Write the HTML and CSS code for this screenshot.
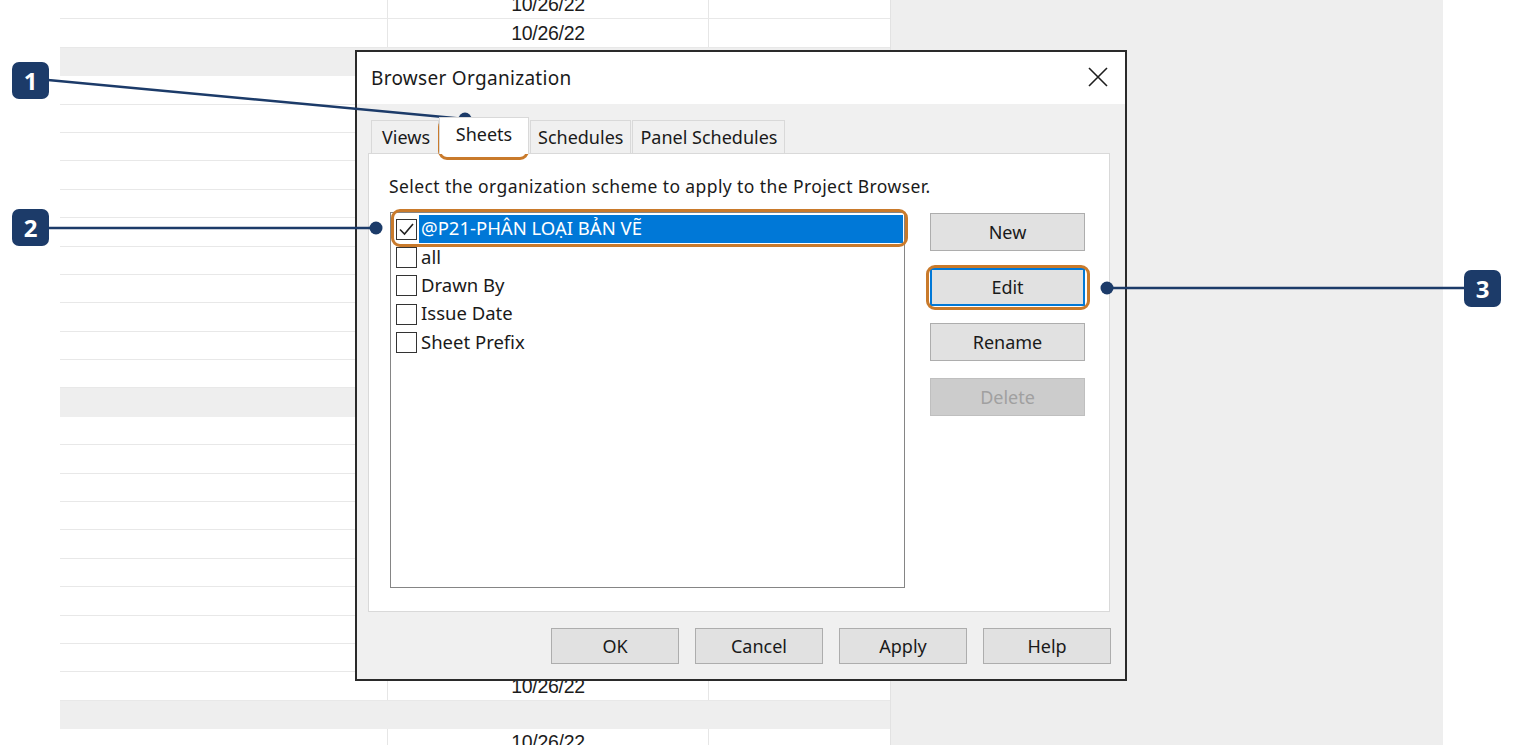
FILE: index.html
```html
<!DOCTYPE html>
<html lang="en">
<head>
<meta charset="utf-8">
<title>Browser Organization</title>
<link rel="stylesheet" href="styles.css">
</head>
<body>
<div class="page">
  <div class="sheet">
    <div class="gutter"></div>
    <div class="table">
      <div class="row"><div class="cell"></div><div class="cell date">10/26/22</div><div class="cell"></div></div>
      <div class="row"><div class="cell"></div><div class="cell date">10/26/22</div><div class="cell"></div></div>
      <div class="row band"></div>
      <div class="row"><div class="cell"></div><div class="cell date">10/26/22</div><div class="cell"></div></div>
      <div class="row"><div class="cell"></div><div class="cell date">10/26/22</div><div class="cell"></div></div>
      <div class="row"><div class="cell"></div><div class="cell date">10/26/22</div><div class="cell"></div></div>
      <div class="row"><div class="cell"></div><div class="cell date">10/26/22</div><div class="cell"></div></div>
      <div class="row"><div class="cell"></div><div class="cell date">10/26/22</div><div class="cell"></div></div>
      <div class="row"><div class="cell"></div><div class="cell date">10/26/22</div><div class="cell"></div></div>
      <div class="row"><div class="cell"></div><div class="cell date">10/26/22</div><div class="cell"></div></div>
      <div class="row"><div class="cell"></div><div class="cell date">10/26/22</div><div class="cell"></div></div>
      <div class="row"><div class="cell"></div><div class="cell date">10/26/22</div><div class="cell"></div></div>
      <div class="row"><div class="cell"></div><div class="cell date">10/26/22</div><div class="cell"></div></div>
      <div class="row"><div class="cell"></div><div class="cell date">10/26/22</div><div class="cell"></div></div>
      <div class="row band"></div>
      <div class="row"><div class="cell"></div><div class="cell date">10/26/22</div><div class="cell"></div></div>
      <div class="row"><div class="cell"></div><div class="cell date">10/26/22</div><div class="cell"></div></div>
      <div class="row"><div class="cell"></div><div class="cell date">10/26/22</div><div class="cell"></div></div>
      <div class="row"><div class="cell"></div><div class="cell date">10/26/22</div><div class="cell"></div></div>
      <div class="row"><div class="cell"></div><div class="cell date">10/26/22</div><div class="cell"></div></div>
      <div class="row"><div class="cell"></div><div class="cell date">10/26/22</div><div class="cell"></div></div>
      <div class="row"><div class="cell"></div><div class="cell date">10/26/22</div><div class="cell"></div></div>
      <div class="row"><div class="cell"></div><div class="cell date">10/26/22</div><div class="cell"></div></div>
      <div class="row"><div class="cell"></div><div class="cell date">10/26/22</div><div class="cell"></div></div>
      <div class="row"><div class="cell"></div><div class="cell date">10/26/22</div><div class="cell"></div></div>
      <div class="row band"></div>
      <div class="row"><div class="cell"></div><div class="cell date">10/26/22</div><div class="cell"></div></div>
    </div>
    <div class="side"></div>
  </div>

  <div class="dialog">
    <div class="titlebar">
      <span class="title">Browser Organization</span>
      <svg class="close" width="20" height="20" viewBox="0 0 20 20"><path d="M1 1 L19 19 M19 1 L1 19" stroke="#1e1e1e" stroke-width="1.6" fill="none"/></svg>
    </div>
    <div class="body">
      <div class="tabs">
        <div class="tab">Views</div>
        <div class="tab active">Sheets</div>
        <div class="tab">Schedules</div>
        <div class="tab">Panel Schedules</div>
      </div>
      <div class="panel">
        <p class="hint">Select the organization scheme to apply to the Project Browser.</p>
        <div class="content">
          <div class="listbox">
            <div class="item">
              <span class="check"><svg width="19" height="19" viewBox="0 0 19 19"><path d="M3 9.5 L7.5 14 L16 4" stroke="#222" stroke-width="1.6" fill="none"/></svg></span>
              <span class="label selected">@P21-PHÂN LOẠI BẢN VẼ</span>
            </div>
            <div class="item"><span class="check"></span><span class="label">all</span></div>
            <div class="item"><span class="check"></span><span class="label">Drawn By</span></div>
            <div class="item"><span class="check"></span><span class="label">Issue Date</span></div>
            <div class="item"><span class="check"></span><span class="label">Sheet Prefix</span></div>
          </div>
          <div class="actions">
            <button class="btn">New</button>
            <button class="btn focused">Edit</button>
            <button class="btn">Rename</button>
            <button class="btn disabled">Delete</button>
          </div>
        </div>
      </div>
      <div class="footer">
        <button class="btn wide">OK</button>
        <button class="btn wide">Cancel</button>
        <button class="btn wide">Apply</button>
        <button class="btn wide">Help</button>
      </div>
    </div>
  </div>

  <div class="overlay">
    <svg class="callouts" width="1520" height="745" viewBox="0 0 1520 745">
      <g stroke="#1c3b69" stroke-width="2.6" fill="none">
        <line x1="48" y1="80" x2="465" y2="119"/>
        <line x1="48" y1="228" x2="376" y2="228"/>
        <line x1="1107" y1="288" x2="1465" y2="288"/>
      </g>
      <g fill="#1c3b69">
        <circle cx="465" cy="119" r="6.5"/>
        <circle cx="376" cy="228" r="6.5"/>
        <circle cx="1107" cy="288" r="6.5"/>
      </g>
    </svg>
    <div class="ring ring-tab"></div>
    <div class="ring ring-row"></div>
    <div class="ring ring-edit"></div>
    <div class="badge badge-1">1</div>
    <div class="badge badge-2">2</div>
    <div class="badge badge-3">3</div>
  </div>
</div>
</body>
</html>
```

FILE: styles.css
```css
* { box-sizing: border-box; }

html, body {
  margin: 0;
  padding: 0;
  background: #ffffff;
}

.page {
  position: relative;
  width: 1520px;
  height: 745px;
  overflow: hidden;
  font-family: "Noto Sans", "Open Sans", sans-serif;
  color: #1a1a1a;
}

/* ---------- background schedule ---------- */
.sheet {
  display: flex;
  height: 745px;
}

.gutter {
  width: 60px;
  flex: none;
}

.table {
  width: 831px;
  flex: none;
  margin-top: -9px;
  border-right: 1px solid #e2e2e2;
}

.row {
  display: grid;
  grid-template-columns: 328px 321px 181px;
  height: 28.4px;
  border-bottom: 1px solid #e8e8e8;
}

.row.band {
  background: #eeeeee;
  border-bottom: none;
}

.cell {
  border-right: 1px solid #e6e6e6;
}

.cell:last-child { border-right: none; }

.date {
  display: flex;
  align-items: center;
  justify-content: center;
  font-family: "Liberation Sans", Arial, sans-serif;
  font-size: 19.5px;
  color: #1c1c1c;
  letter-spacing: -0.3px;
}

.side {
  width: 552px;
  flex: none;
  background: #eeeeee;
}

/* ---------- dialog ---------- */
.dialog {
  position: absolute;
  left: 355px;
  top: 50px;
  width: 772px;
  height: 631px;
  border: 2px solid #2a2a2a;
  background: #f0f0f0;
  display: flex;
  flex-direction: column;
}

.titlebar {
  height: 52px;
  flex: none;
  background: #ffffff;
  display: flex;
  align-items: center;
  justify-content: space-between;
  padding: 0 17px 0 14px;
}

.title {
  font-size: 19px;
  letter-spacing: 0.3px;
  color: #1a1a1a;
}

.close { display: block; margin-top: -2px; }

.body {
  flex: 1;
  display: flex;
  flex-direction: column;
  padding: 13px 14px 0 11px;
}

.tabs {
  display: flex;
  align-items: flex-end;
  height: 36px;
  padding-left: 3px;
}

.tab {
  height: 33px;
  padding: 0 7px;
  border: 1px solid #d9d9d9;
  border-bottom: none;
  background: #f0f0f0;
  font-size: 18px;
  line-height: 33px;
  color: #1a1a1a;
  margin-right: 1px;
}

.tab:first-child { width: 68px; padding: 0 10px; margin-right: 0; }

.tab.active {
  height: 37px;
  width: 90px;
  text-align: center;
  background: #ffffff;
  margin-bottom: -1px;
  line-height: 32px;
  position: relative;
  z-index: 1;
}

.panel {
  height: 459px;
  margin-right: 1px;
  background: #ffffff;
  border: 1px solid #d9d9d9;
  padding: 20px 20px 0 20px;
}

.hint {
  margin: 0;
  font-size: 17.5px;
  letter-spacing: 0.4px;
  line-height: 24px;
  color: #1a1a1a;
  white-space: nowrap;
}

.content {
  display: flex;
  gap: 25px;
  margin-top: 14px;
  margin-left: 1px;
}

.listbox {
  width: 515px;
  height: 376px;
  border: 1px solid #858585;
  padding-top: 2px;
}

.item {
  display: flex;
  align-items: center;
  height: 28.4px;
}

.check {
  width: 21px;
  height: 21px;
  flex: none;
  margin-left: 5px;
  border: 1.5px solid #333333;
  background: #ffffff;
  display: flex;
  align-items: center;
  justify-content: center;
}

.check svg { display: block; }

.label {
  flex: 1;
  height: 28px;
  margin-left: 2px;
  margin-right: 1px;
  padding-left: 2px;
  font-size: 18.5px;
  line-height: 26px;
  color: #1a1a1a;
}

.label.selected {
  background: #0078d7;
  color: #ffffff;
}

.actions {
  width: 155px;
  display: flex;
  flex-direction: column;
  gap: 17px;
  margin-top: 1px;
}

.btn {
  height: 38px;
  padding: 0;
  border: 1px solid #adadad;
  background: #e1e1e1;
  font-family: "Noto Sans", "Open Sans", sans-serif;
  font-size: 18px;
  color: #1a1a1a;
}

.btn.focused {
  border: 2px solid #0078d7;
}

.btn.disabled {
  background: #cccccc;
  border-color: #bfbfbf;
  color: #a0a0a0;
}

.footer {
  display: flex;
  justify-content: flex-end;
  gap: 16px;
  margin-top: 16px;
}

.btn.wide {
  width: 128px;
  height: 36px;
}

/* ---------- callout overlay ---------- */
.overlay {
  position: absolute;
  inset: 0;
  pointer-events: none;
}

.callouts {
  position: absolute;
  left: 0;
  top: 0;
}

.ring {
  position: absolute;
  border: 3px solid #c97a2b;
  border-radius: 9px;
}

.ring-tab { left: 438px; top: 118px; width: 91px; height: 42px; }
.ring-row { left: 391px; top: 209px; width: 517px; height: 38px; }
.ring-edit { left: 926px; top: 265px; width: 164px; height: 45px; }

.badge {
  position: absolute;
  width: 37px;
  height: 37px;
  border-radius: 7px;
  background: #1c3b69;
  color: #ffffff;
  font-family: "Open Sans", "Noto Sans", sans-serif;
  font-weight: 700;
  font-size: 24px;
  line-height: 37px;
  text-align: center;
}

.badge-1 { left: 12px; top: 62px; }
.badge-2 { left: 12px; top: 209px; }
.badge-3 { left: 1464px; top: 270px; }
```
